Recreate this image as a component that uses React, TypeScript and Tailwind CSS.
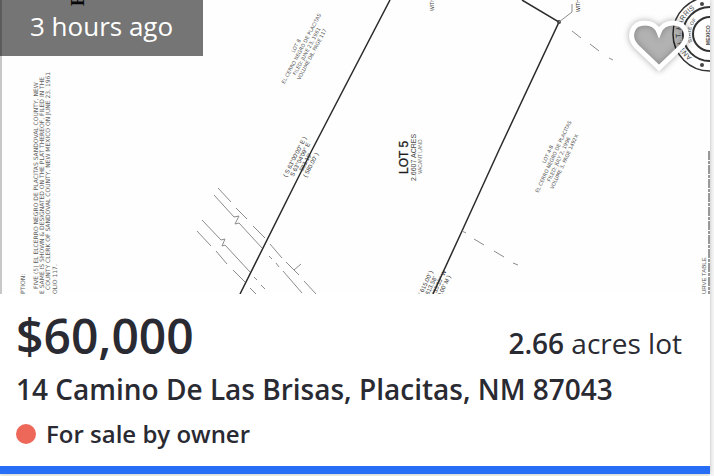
import React from "react";

type Segment = [number, number, number, number];

const boundaries = [
  "M390 0L312 150L240 294",
  "M522 0L559 22L499 150L462 231L433 294",
];

const dashes: Segment[] = [
  [218, 188, 231, 202], [236, 208, 247, 219], [253, 226, 265, 238], [270, 244, 282, 258],
  [286, 262, 299, 275], [304, 281, 316, 294],
  [269, 256, 272, 259], [276, 263, 279, 267], [283, 271, 302, 293],
  [254, 277, 257, 280], [261, 285, 265, 289],
  [197, 231, 211, 246], [216, 251, 227, 264], [233, 270, 245, 282], [250, 288, 256, 294],
  [294, 270, 301, 264],
  [572, 31, 581, 38], [590, 44, 599, 51], [609, 58, 613, 60],
  [462, 231, 466, 233], [474, 239, 484, 245], [494, 251, 504, 257], [513, 263, 518, 265],
];

const deed = [
  { x: 25, y: 294, text: "PTION:" },
  { x: 38, y: 289, text: "FIVE (5) EL ELCERRO NEGRO DE PLACITAS SANDOVAL COUNTY, NEW" },
  { x: 44, y: 294, text: "E SAME IS SHOWN & DESIGNATED ON THE PLAT THEREOF, FILED IN THE" },
  { x: 50, y: 290, text: "COUNTY CLERK OF SANDOVAL COUNTY, NEW MEXICO ON JUNE 23, 1961" },
  { x: 57, y: 294, text: "OLIO 117." },
];

function Note({ x, y, angle, lines, className }: { x: number; y: number; angle: number; lines: string[]; className: string }) {
  return (
    <g transform={`translate(${x} ${y}) rotate(${angle})`} textAnchor="middle" className={className}>
      {lines.map((line, i) => (
        <text key={line} y={i * 6 - 5}>{line}</text>
      ))}
    </g>
  );
}

function PlatMap() {
  return (
    <svg
      viewBox="0 0 710 294"
      preserveAspectRatio="xMidYMid slice"
      role="img"
      aria-label="Plat map of lot 5"
      className="block w-full bg-[#fefefe] font-['Liberation_Sans',sans-serif]"
    >
      <path d="M1 0V294" stroke="#b5b5b5" strokeWidth="1.5" />
      <g fill="#606060" className="font-['DejaVu_Sans',sans-serif] text-[6px]">
        {deed.map((line) => (
          <text key={line.text} transform={`translate(${line.x} ${line.y}) rotate(-90)`}>{line.text}</text>
        ))}
      </g>
      <text transform="translate(84 6) rotate(-90)" fill="#111" className="font-['Liberation_Serif',serif] text-[18px] font-bold">E</text>

      <g fill="none" stroke="#2b2b2b" strokeWidth="1.5">
        {boundaries.map((d) => <path key={d} d={d} />)}
      </g>
      <circle cx="559" cy="22" r="2" fill="#444" />
      <g fill="none" stroke="#8c8c8c">
        <path d="M559 22L572 12V4" />
        <path d="M214 195L234 217L239 216L235 224L239 223L262 248" />
        <path d="M202 220L221 240L225 239L222 246L225 245L250 272" />
        {dashes.map(([x1, y1, x2, y2]) => (
          <line key={`${x1}-${y1}`} x1={x1} y1={y1} x2={x2} y2={y2} />
        ))}
      </g>

      <g fill="#505050" className="font-['DejaVu_Sans',sans-serif]">
        <Note x={302} y={49} angle={-62} className="text-[5px]" lines={["LOT 8", "EL CERRO NEGRO DE PLACITAS", "FILED: JUNE 23, 1961", "VOLUME D8, PAGE 117"]} />
        <Note x={554} y={157} angle={-65} className="text-[5px]" lines={["LOT 4-B", "EL CERRO NEGRO DE PLACITAS", "FILED: JULY 2, 1996", "VOLUME 3, PAGE 1492X"]} />
      </g>
      <g fill="#333">
        <Note x={301} y={160} angle={-63} className="text-[6px]" lines={["( S 63°00'00\" E )", "S 63°04'09\" E", "583.19'", "( 580.00' )"]} />
        <Note x={432} y={286} angle={-65} className="text-[6px]" lines={["( 615.00' )", "613.58'", "S 63°35'35\" W", "( 600.00' M )"]} />
      </g>
      <text transform="translate(408 174) rotate(-90)" fill="#1c1c1c" stroke="#1c1c1c" strokeWidth="0.3" className="text-[12px]">LOT 5</text>
      <text transform="translate(416 181) rotate(-90)" fill="#444" className="text-[7px]">2.6607 ACRES</text>
      <text transform="translate(422 174) rotate(-90)" fill="#666" className="text-[5px]">VACANT LAND</text>
      <text transform="translate(434 11) rotate(-90)" fill="#444" className="text-[5px]">WITH</text>
      <text transform="translate(580 12) rotate(-90)" fill="#222" className="text-[5px]">WITH</text>
      <text transform="translate(706 294) rotate(-90)" fill="#555" className="text-[6px]">URVE TABLE</text>
      <path d="M709 151V294" stroke="#777" strokeWidth="1.5" strokeDasharray="9 1 3 1" />

      <g fill="none" stroke="#333">
        <circle cx="710" cy="34" r="37" strokeWidth="1.5" />
        <circle cx="710" cy="34" r="27" strokeWidth="2" />
        <circle cx="710" cy="34" r="17" strokeWidth="2" />
        <path id="seal-outer" d="M699 61A29 29 0 0 1 699 7" stroke="none" />
        <path id="seal-inner" d="M702 52A20 20 0 0 1 702 16" stroke="none" />
      </g>
      <g fill="#444">
        <text className="text-[7px]"><textPath href="#seal-outer" startOffset="8">ANTH. T. HARRIS</textPath></text>
        <text className="text-[5px]"><textPath href="#seal-inner" startOffset="14">STATE OF</textPath></text>
        <circle cx="702" cy="4" r="2" />
        <circle cx="702" cy="65" r="2" />
        <text transform="translate(710 45) rotate(-90)" className="text-[5px] font-bold">MEXICO</text>
      </g>
    </svg>
  );
}

export default function App() {
  return (
    <main className="bg-[#f7f7f7] pr-1 pb-0.5 font-['Open_Sans',sans-serif] text-[#2a2a33]">
      <article className="bg-white shadow-[0_0_4px_rgba(0,0,0,0.25)]">
        <div className="relative overflow-hidden">
          <PlatMap />
          <div className="absolute top-0 left-0 bg-black/54 pt-2 pr-[30px] pb-3 pl-[30px] text-[26px] leading-9 text-white">
            3 hours ago
          </div>
          <button type="button" aria-label="Save listing" className="absolute top-[18px] right-5 cursor-pointer">
            <svg width="62" height="56" viewBox="629 18 62 56" className="overflow-visible drop-shadow-[0_0_3px_rgba(0,0,0,0.35)]">
              <path
                d="M660 68L637 46C629 37 632 23 646 23C653 23 658 27 660 32C662 27 667 23 674 23C688 23 691 37 683 46Z"
                fill="#000"
                fillOpacity="0.24"
                stroke="#fff"
                strokeWidth="5"
              />
            </svg>
          </button>
        </div>
        <div className="px-4 pt-2.5 pb-3.5">
          <div className="flex items-baseline justify-between pr-3">
            <p className="text-5xl leading-16 font-semibold">$60,000</p>
            <p className="text-[28px] leading-10"><strong className="font-semibold">2.66</strong> acres lot</p>
          </div>
          <h2 className="pt-px text-[28px] leading-10 font-semibold">14 Camino De Las Brisas, Placitas, NM 87043</h2>
          <p className="flex items-center gap-2.5 pt-[7px] text-2xl leading-9 font-semibold">
            <span className="size-5 rounded-full bg-[#ee6859]" />
            For sale by owner
          </p>
        </div>
        <div className="h-2 bg-[#256ef5]" />
      </article>
    </main>
  );
}
